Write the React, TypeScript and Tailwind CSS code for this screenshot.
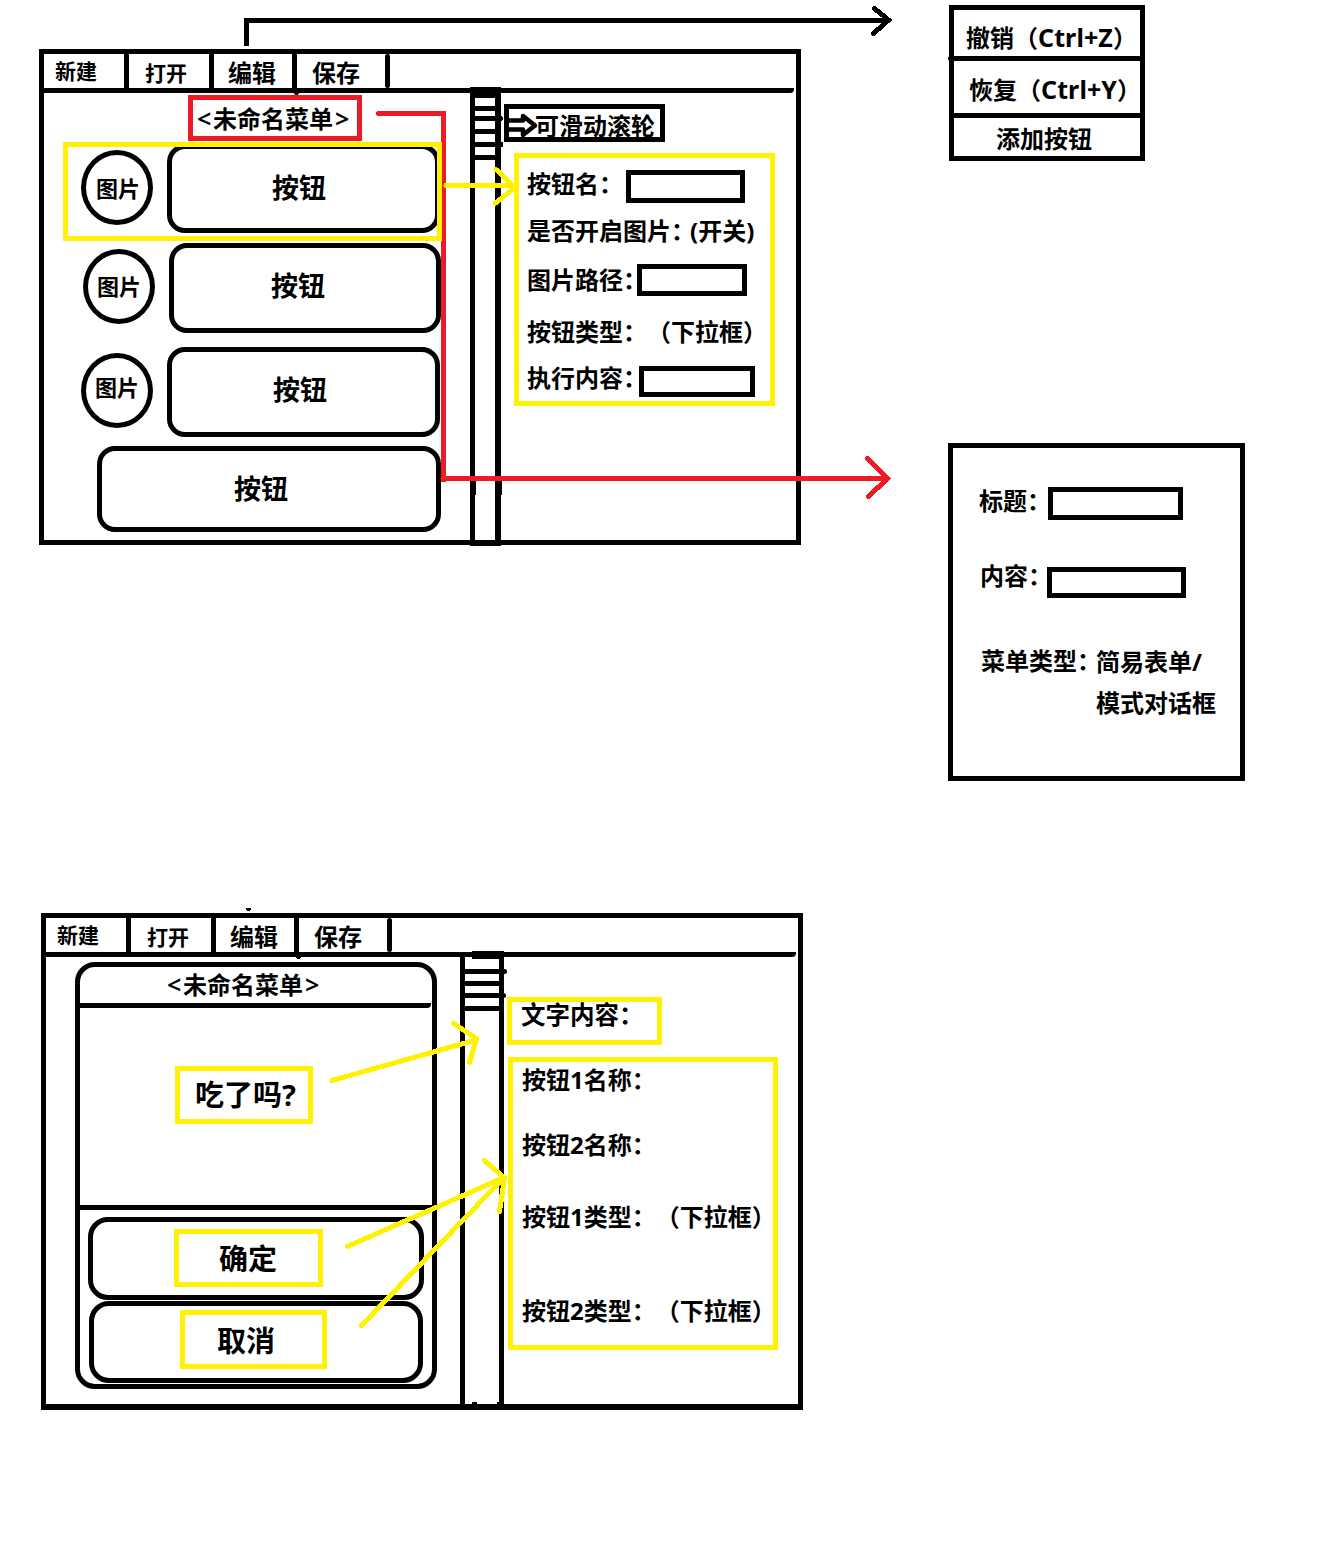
import React from "react";

const latin = "font-['Noto_Sans'] font-bold";

/** Bold label; `className` carries its margins and size. */
function Label({ className = "", children }: { className?: string; children: React.ReactNode }) {
  return <div className={`h-6 whitespace-nowrap leading-6 ${className}`}>{children}</div>;
}

function Field({ className }: { className: string }) {
  return <div className={`shrink-0 border-[5px] border-black ${className}`} />;
}

function MenuBar() {
  return (
    <div className="mr-0.5 flex h-[39px] shrink-0 rounded-r-sm border-b-[5px] border-black">
      <div className="w-[85px] border-r-[5px] border-black pl-[11px] pt-[4px] text-[21px] leading-6">新建</div>
      <div className="w-[85px] border-r-[5px] border-black pl-[16px] pt-[6px] text-[21px] leading-6">打开</div>
      <div className="w-[83px] border-r-[5px] border-black pl-[14px] pt-[6px] leading-6">编辑</div>
      <div className="w-[88px] pl-[15px] pt-[6px] leading-6">保存</div>
      <div className="h-[34px] w-[5px] rounded-full bg-black" />
    </div>
  );
}

function MenuName() {
  return (
    <div className="flex h-6 leading-6">
      <span className="-ml-px w-[16px] font-['Noto_Sans'] text-[25px] font-semibold">&lt;</span>
      <span>未命名菜单</span>
      <span className="ml-[2px] font-['Noto_Sans'] text-[25px] font-semibold">&gt;</span>
    </div>
  );
}

function Picture({ className, text }: { className: string; text: string }) {
  return (
    <div className={`h-[75px] w-[72px] shrink-0 rounded-[50%] border-[5px] border-black text-[22px] leading-6 ${className}`}>
      <span className={`block whitespace-nowrap ${text}`}>图片</span>
    </div>
  );
}

function RoundButton({ className, text, children }: { className: string; text: string; children: React.ReactNode }) {
  return (
    <div className={`shrink-0 rounded-[18px] border-[5px] border-black text-[27px] leading-7 ${className}`}>
      <span className={`block whitespace-nowrap ${text}`}>{children}</span>
    </div>
  );
}

function ListEditor() {
  return (
    <section className="ml-[39px] mt-[49px] flex h-[496px] w-[762px] flex-col border-[5px] border-black">
      <MenuBar />
      <div className="flex h-[447px]">
        <div className="w-[426px]">
          <div className="ml-36 mt-0.5 h-[46px] w-[174px] border-[5px] border-[#ed1c24] pl-[5px] pt-[6px]">
            <MenuName />
          </div>
          <div className="relative ml-[19px] mt-px flex h-[99px] w-[379px]">
            <Picture className="ml-[18px] mt-2" text="ml-[10px] mt-[20px]" />
            <RoundButton className="ml-[14px] mt-0.5 h-[89px] w-[273px]" text="ml-[100px] mt-[24px]">按钮</RoundButton>
            <div className="absolute inset-0 z-20 border-[5px] border-[#fff200]" />
          </div>
          <div className="ml-[39px] mt-0.5 flex h-[90px]">
            <Picture className="mt-1.5" text="ml-[9px] mt-[19px]" />
            <RoundButton className="ml-[14px] h-[90px] w-[272px]" text="ml-[97px] mt-[23px]">按钮</RoundButton>
          </div>
          <div className="ml-[37px] mt-[14px] flex h-[90px]">
            <Picture className="mt-1.5" text="ml-[9px] mt-[16px]" />
            <RoundButton className="ml-[14px] h-[90px] w-[273px]" text="ml-[101px] mt-[23px]">按钮</RoundButton>
          </div>
          <RoundButton className="ml-[53px] mt-[9px] h-[86px] w-[344px]" text="ml-[132px] mt-[23px]">按钮</RoundButton>
        </div>

        <div className="-mt-1.5 h-[459px] w-[31px] shrink-0 border-b-[6px] border-l-[5px] border-r-[6px] border-t-[11px] border-black">
          <div className="mt-2 h-[5px] bg-black" />
          <div className="mt-[5px] h-[5px] bg-black" />
          <div className="mt-2 h-[5px] bg-black" />
          <div className="mt-2 h-[5px] bg-black" />
          <div className="mt-2 h-[5px] bg-black" />
        </div>

        <div className="w-[290px]">
          <div className="ml-[3px] mt-[11px] flex h-[38px] w-[161px] border-[5px] border-black">
            <svg className="h-7 w-[26px] shrink-0 overflow-visible" viewBox="0 0 26 28" fill="none" stroke="black" strokeWidth="4.5" strokeLinejoin="round">
              <path d="M0 11.5H14V7L26 16.5L14 26V20.500H0" />
            </svg>
            <Label className="mt-[4px]">可滑动滚轮</Label>
          </div>
          <div className="ml-[13px] mt-[11px] flex h-[253px] w-[261px] flex-col border-[5px] border-[#fff200] pl-2">
            <div className="flex h-[45px]">
              <Label className="mt-[13px] w-[99px]">按钮名：</Label>
              <Field className="mt-3 h-[33px] w-[119px]" />
            </div>
            <div className="mt-[15px] flex h-6">
              <Label>是否开启图片</Label>
              <Label className="w-[19px] [font-feature-settings:'halt']">：</Label>
              <Label className="w-16"><span className={latin}>(</span>开关<span className={latin}>)</span></Label>
            </div>
            <div className="mt-[22px] flex h-8">
              <Label className="mt-[3px] w-[110px]">图片路径：</Label>
              <Field className="h-8 w-[110px]" />
            </div>
            <Label className="mt-[23px]">按钮类型：（下拉框）</Label>
            <div className="mt-[23px] flex">
              <Label className="-mt-px w-[112px]">执行内容：</Label>
              <Field className="h-[31px] w-[116px]" />
            </div>
          </div>
        </div>
      </div>
    </section>
  );
}

function DialogEditor() {
  return (
    <section className="ml-[41px] mt-[368px] flex h-[497px] w-[762px] flex-col border-[5px] border-b-[6px] border-black">
      <MenuBar />
      <div className="flex h-[447px]">
        <div className="w-[414px]">
          <div className="ml-[29px] mt-[5px] h-[427px] w-[362px] rounded-[20px] border-[5px] border-black">
            <div className="mr-px h-[41px] rounded-r-sm border-b-[5px] border-black pl-[88px] pt-[5px]">
              <MenuName />
            </div>
            <div className="h-[202px] border-b-[5px] border-black pl-[95px] pt-[58px]">
              <div className="h-[58px] w-[138px] whitespace-nowrap border-[5px] border-[#fff200] pl-[15px] pt-[6px] text-[29px] leading-8">
                吃了吗<span className={latin}>?</span>
              </div>
            </div>
            <div className="ml-2 mt-[7px] h-[83px] w-[336px] rounded-[20px] border-[5px] border-black pl-[81px] pt-[7px]">
              <div className="h-[58px] w-[149px] border-[5px] border-[#fff200] pl-10 pt-[7px] text-[29px] leading-8">确定</div>
            </div>
            <div className="ml-[9px] mt-px h-[82px] w-[334px] rounded-[20px] border-[5px] border-black pl-[86px] pt-1">
              <div className="h-[59px] w-[147px] border-[5px] border-[#fff200] pl-8 pt-[8px] text-[29px] leading-8">取消</div>
            </div>
          </div>
        </div>

        <div className="h-[447px] w-11 shrink-0 border-x-[5px] border-black">
          <div className="-mr-2 mt-3 h-[5px] rounded-r-full bg-black" />
          <div className="mt-[7px] h-[5px] bg-black" />
          <div className="-mr-[7px] mt-[7px] h-[5px] rounded-r-full bg-black" />
          <div className="mt-2 h-[5px] bg-black" />
        </div>

        <div className="w-[290px]">
          <div className="ml-[3px] mt-10 h-12 w-[155px] border-[5px] border-[#fff200] pl-[9px]">
            <Label className="text-[24.5px]">文字内容：</Label>
          </div>
          <div className="ml-1 mt-3 flex h-[293px] w-[270px] flex-col border-[5px] border-[#fff200] pl-[9px]">
            <Label className="mt-[5px]">按钮<span className={latin}>1</span>名称：</Label>
            <Label className="mt-[41px]">按钮<span className={latin}>2</span>名称：</Label>
            <Label className="mt-[48px]">按钮<span className={latin}>1</span>类型：（下拉框）</Label>
            <Label className="mt-[70px]">按钮<span className={latin}>2</span>类型：（下拉框）</Label>
          </div>
        </div>
      </div>
    </section>
  );
}

function EditMenu() {
  return (
    <section className="ml-[146px] mt-[5px] h-[156px] w-[196px] border-[5px] border-black">
      <div className="h-[51px] border-b-[5px] border-black pl-3 pt-[15px]">
        <Label>撤销（<span className={`${latin} text-[25px] tracking-[0.1px]`}>Ctrl+Z</span>）</Label>
      </div>
      <div className="h-[57px] border-b-[5px] border-black pl-[15px] pt-[16px]">
        <Label>恢复（<span className={`${latin} text-[25px] tracking-[0.1px]`}>Ctrl+Y</span>）</Label>
      </div>
      <div className="pl-[42px] pt-[8px]">
        <Label>添加按钮</Label>
      </div>
    </section>
  );
}

function MenuSettings() {
  return (
    <section className="ml-[145px] mt-[282px] h-[338px] w-[297px] border-[5px] border-black">
      <div className="ml-[26px] mt-[39px] flex h-[33px]">
        <Label className="mt-[1px] w-[69px]">标题：</Label>
        <Field className="h-[33px] w-[135px]" />
      </div>
      <div className="ml-[27px] mt-[43px] flex h-[35px]">
        <Label className="w-[67px]">内容：</Label>
        <Field className="mt-1 h-[31px] w-[139px]" />
      </div>
      <div className="ml-[28px] mt-[50px] flex">
        <Label className="w-[115px]">菜单类型：</Label>
        <div className="mt-px">
          <Label>简易表单<span className={latin}>/</span></Label>
          <Label className="mt-[17px]">模式对话框</Label>
        </div>
      </div>
    </section>
  );
}

/** Hand-drawn connector arrows and stray pen marks over the panels. */
function Connectors() {
  return (
    <svg className="pointer-events-none absolute inset-0 z-10" width="1342" height="1564" fill="none" strokeWidth="5" strokeLinecap="round" shapeRendering="crispEdges">
      <g stroke="#000">
        <path d="M246.500 44V20.500H888M874.500 8.500L888.500 20L873.500 33.500" />
        <path d="M296.500 91V92.500M298.500 955V956.500M500 118.500H500.500M500 144.500H501" />
        <path d="M472 955H504" strokeWidth="8" strokeLinecap="butt" />
        <path d="M472 1404H477M497 1404H503" strokeWidth="4" strokeLinecap="butt" />
        <path d="M246 909H251M247 910H250" strokeWidth="2" strokeLinecap="butt" />
        <path d="M472.500 481V495M499 481V495" strokeLinecap="butt" strokeWidth="6" />
        <path d="M948 58.500H950" strokeWidth="3" strokeLinecap="butt" />
      </g>
      <g stroke="#ed1c24">
        <path d="M378.500 113.500H443.500V480M443 478.500H887M867.500 458.500L887.500 478.500L868.500 496.500" />
      </g>
      <g stroke="#fff200">
        <path d="M446 185.500H514M496 169.500L515 187.500L495 203.500" />
        <path d="M332 1080.500L476 1040M453.500 1023.500L476.500 1038.500L469.500 1062.500" />
        <path d="M347.500 1246.500L504 1177.500L361.500 1325.500M484.500 1160.500L504.500 1178L499.500 1211.500" />
      </g>
    </svg>
  );
}

export default function App() {
  return (
    <main className="relative flex h-[1564px] w-[1342px] overflow-hidden bg-white font-['Noto_Sans_CJK_SC',sans-serif] text-[24px] font-bold text-black [text-spacing-trim:space-all]">
      <div className="w-[803px] shrink-0">
        <ListEditor />
        <DialogEditor />
      </div>
      <div className="w-[539px]">
        <EditMenu />
        <MenuSettings />
      </div>
      <Connectors />
    </main>
  );
}
